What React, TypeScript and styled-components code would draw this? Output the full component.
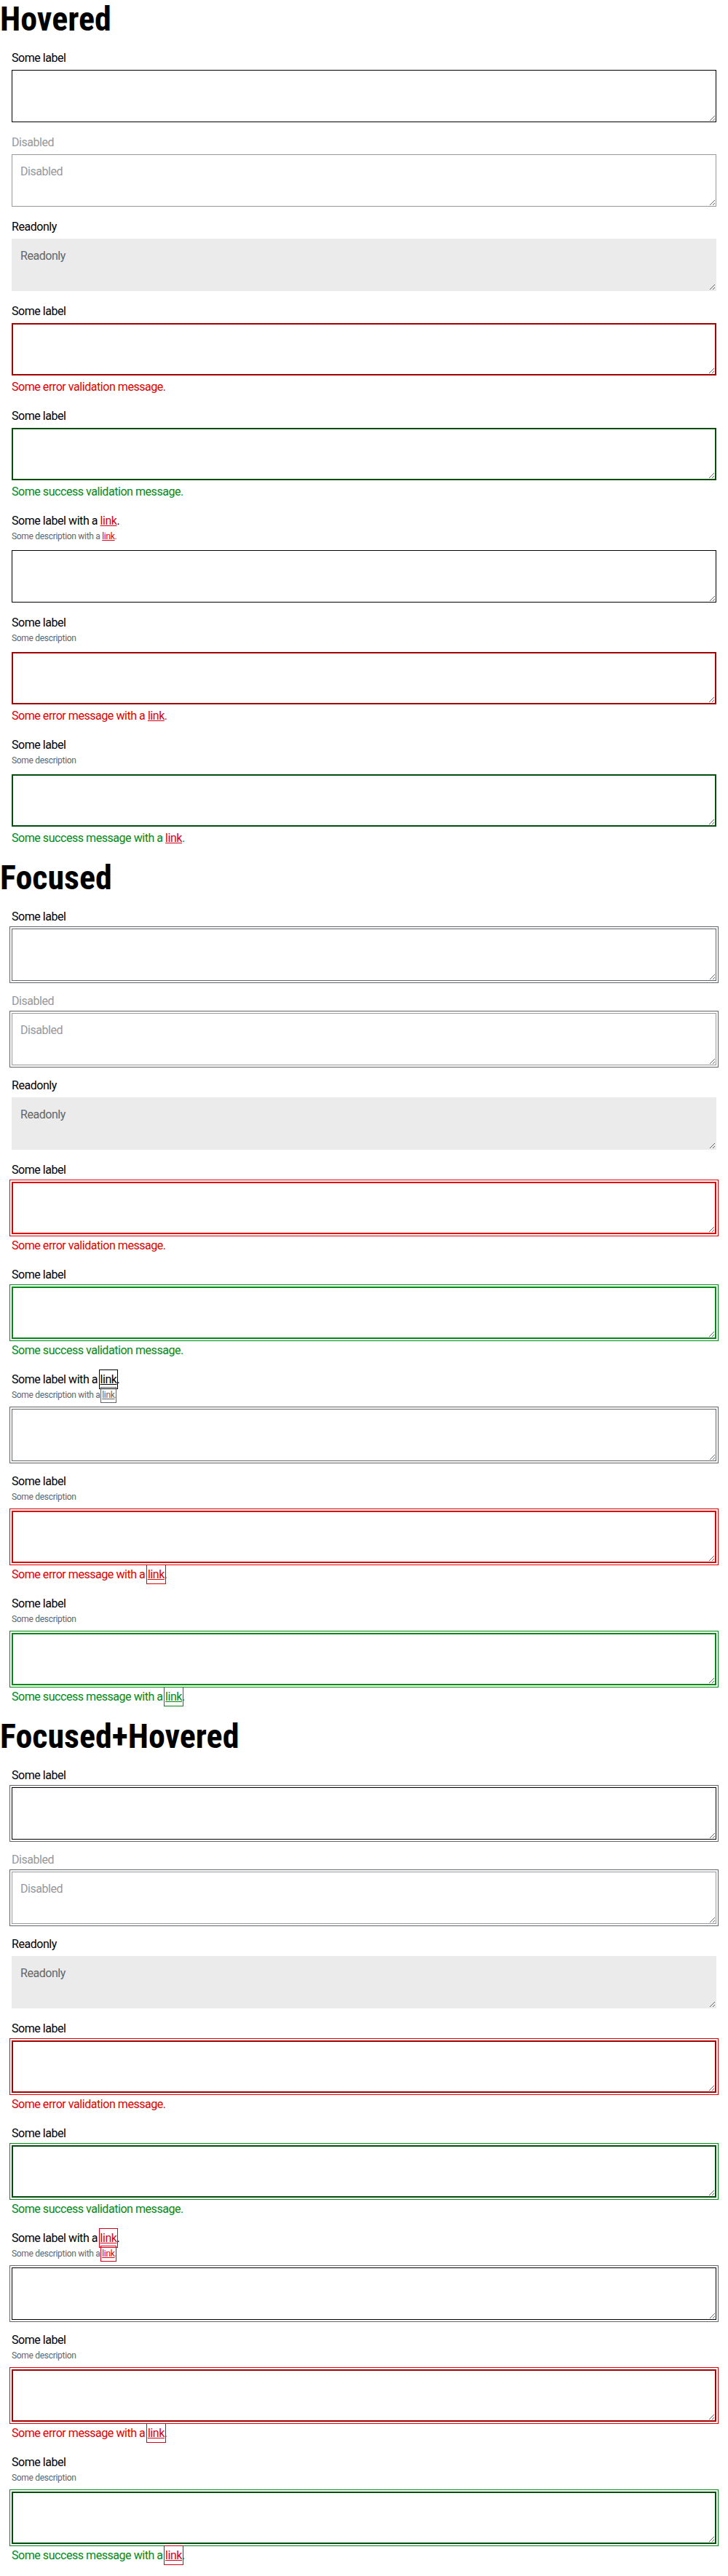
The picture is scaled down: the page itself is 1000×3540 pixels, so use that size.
import React from 'react';
import styled, { createGlobalStyle, css } from 'styled-components';

type Mode = 'hover' | 'focus' | 'focusHover';
type Tone = 'none' | 'error' | 'success';
type LinkCtx = 'label' | 'description' | 'error' | 'success';

const C = {
  text: '#000000',
  medium: '#626669',
  disabled: '#96989a',
  brand: '#d5001c',
  error: '#e00000',
  errorDark: '#a30000',
  success: '#018a16',
  successDark: '#014d0c',
  readonly: '#ebebeb',
};

const Global = createGlobalStyle`
  html, body { margin: 0; padding: 0; background: #fff; }
  body {
    font-family: Roboto, "Liberation Sans", Arial, sans-serif;
    color: #000;
  }
  *, *::before, *::after { box-sizing: border-box; }
`;

const Page = styled.main`
  display: flex;
  flex-direction: column;
  width: 1000px;
`;

const Section = styled.section`
  display: flex;
  flex-direction: column;
  padding-bottom: 16px;
`;

const Heading = styled.h1`
  margin: 0;
  font-family: "Roboto Condensed", Roboto, "Liberation Sans", sans-serif;
  font-weight: 700;
  font-size: 46px;
  line-height: 52px;
  color: #000;
`;

const Field = styled.div`
  display: flex;
  flex-direction: column;
  margin-top: 16px;
  padding: 0 16px;
`;

const Label = styled.label<{ $disabled?: boolean }>`
  display: block;
  font-size: 16px;
  line-height: 24px;
  letter-spacing: -0.45px;
  color: ${(p) => (p.$disabled ? C.disabled : C.text)};
`;

const Description = styled.span`
  display: block;
  font-size: 12px;
  line-height: 18px;
  letter-spacing: -0.3px;
  margin-bottom: 6px;
  color: ${C.medium};
`;

const borderColor = (mode: Mode, tone: Tone, disabled: boolean) => {
  if (disabled) return C.disabled;
  if (tone === 'error') return mode === 'focus' ? C.error : C.errorDark;
  if (tone === 'success') return mode === 'focus' ? C.success : C.successDark;
  return mode === 'focus' ? C.medium : C.text;
};

const outlineColor = (tone: Tone) =>
  tone === 'error' ? C.error : tone === 'success' ? C.success : C.medium;

const Area = styled.textarea<{ $mode: Mode; $tone: Tone; $readonly?: boolean }>`
  display: block;
  width: 100%;
  height: 72px;
  margin: 4px 0 0;
  font-family: inherit;
  font-size: 16px;
  line-height: 24px;
  letter-spacing: -0.45px;
  color: ${C.text};
  background: #fff;
  border-style: solid;
  border-radius: 0;
  resize: vertical;
  border-width: ${(p) => (p.$tone === 'none' ? '1px' : '2px')};
  padding: ${(p) => (p.$tone === 'none' ? '11px' : '10px')};
  border-color: ${(p) => borderColor(p.$mode, p.$tone, !!p.disabled)};
  outline: none;

  &:disabled {
    color: ${C.disabled};
    -webkit-text-fill-color: ${C.disabled};
    background: #fff;
  }

  ${(p) =>
    p.$mode !== 'hover' &&
    !p.$readonly &&
    css`
      outline: 1px solid ${outlineColor(p.$tone)};
      outline-offset: 2px;
    `}

  ${(p) =>
    p.$readonly &&
    css`
      background: ${C.readonly};
      border-color: ${C.readonly};
      color: ${C.medium};
      -webkit-text-fill-color: ${C.medium};
      outline: none;
    `}
`;

const Message = styled.p<{ $tone: Tone }>`
  margin: 4px 0 0;
  font-size: 16px;
  line-height: 24px;
  letter-spacing: -0.45px;
  color: ${(p) => (p.$tone === 'error' ? C.error : C.success)};
`;

const ctxColor: Record<LinkCtx, string> = {
  label: C.text,
  description: C.medium,
  error: C.error,
  success: C.success,
};

const Link = styled.a<{ $mode: Mode; $ctx: LinkCtx }>`
  text-decoration: underline;
  color: ${(p) => (p.$mode === 'focus' ? ctxColor[p.$ctx] : C.brand)};
  ${(p) =>
    p.$mode !== 'hover' &&
    css`
      outline: 1px solid currentColor;
      outline-offset: 1px;
      padding: 2px 0;
    `}
`;

type Renderable = React.ReactNode | ((m: Mode) => React.ReactNode);

type FieldSpec = {
  label: Renderable;
  description?: Renderable;
  disabled?: boolean;
  readonly?: boolean;
  value?: string;
  tone?: Tone;
  message?: Renderable;
};

const render = (v: Renderable, m: Mode) =>
  typeof v === 'function' ? (v as (m: Mode) => React.ReactNode)(m) : v;

const fields: FieldSpec[] = [
  { label: 'Some label' },
  { label: 'Disabled', disabled: true, value: 'Disabled' },
  { label: 'Readonly', readonly: true, value: 'Readonly' },
  { label: 'Some label', tone: 'error', message: 'Some error validation message.' },
  { label: 'Some label', tone: 'success', message: 'Some success validation message.' },
  {
    label: (m: Mode) => (
      <>
        Some label with a <Link href="#" $mode={m} $ctx="label">link</Link>.
      </>
    ),
    description: (m: Mode) => (
      <>
        Some description with a <Link href="#" $mode={m} $ctx="description">link</Link>.
      </>
    ),
  },
  {
    label: 'Some label',
    description: 'Some description',
    tone: 'error',
    message: (m: Mode) => (
      <>
        Some error message with a <Link href="#" $mode={m} $ctx="error">link</Link>.
      </>
    ),
  },
  {
    label: 'Some label',
    description: 'Some description',
    tone: 'success',
    message: (m: Mode) => (
      <>
        Some success message with a <Link href="#" $mode={m} $ctx="success">link</Link>.
      </>
    ),
  },
];

const sections: { title: string; mode: Mode }[] = [
  { title: 'Hovered', mode: 'hover' },
  { title: 'Focused', mode: 'focus' },
  { title: 'Focused+Hovered', mode: 'focusHover' },
];

const TextareaField: React.FC<{ spec: FieldSpec; mode: Mode }> = ({ spec, mode }) => {
  const tone = spec.tone ?? 'none';
  return (
    <Field>
      <Label $disabled={spec.disabled}>{render(spec.label, mode)}</Label>
      {spec.description && <Description>{render(spec.description, mode)}</Description>}
      <Area
        $mode={mode}
        $tone={tone}
        $readonly={spec.readonly}
        disabled={spec.disabled}
        readOnly={spec.readonly}
        defaultValue={spec.value}
      />
      {spec.message && <Message $tone={tone}>{render(spec.message, mode)}</Message>}
    </Field>
  );
};

export default function App() {
  return (
    <>
      <Global />
      <Page>
        {sections.map((s) => (
          <Section key={s.title}>
            <Heading>{s.title}</Heading>
            {fields.map((f, i) => (
              <TextareaField key={i} spec={f} mode={s.mode} />
            ))}
          </Section>
        ))}
      </Page>
    </>
  );
}
